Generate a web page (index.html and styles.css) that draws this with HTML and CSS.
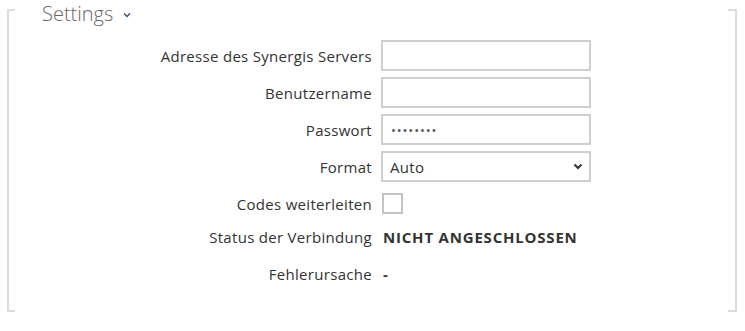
FILE: index.html
```html
<!DOCTYPE html>
<html lang="de">
<head>
<meta charset="utf-8">
<title>Settings</title>
<link rel="stylesheet" href="styles.css">
</head>
<body>
<section class="panel">
  <h2 class="panel-title">Settings
    <svg class="chev" width="8" height="6" viewBox="0 0 8 6"><polyline points="1,1.5 4,4.5 7,1.5" fill="none" stroke="#3a4a7a" stroke-width="1.4"/></svg>
  </h2>
  <div class="form">
    <label class="lbl" for="addr">Adresse des Synergis Servers</label>
    <div class="val"><input class="field" id="addr" type="text"></div>

    <label class="lbl" for="user">Benutzername</label>
    <div class="val"><input class="field" id="user" type="text"></div>

    <label class="lbl" for="pass">Passwort</label>
    <div class="val"><input class="field pw" id="pass" type="password" value="12345678"></div>

    <label class="lbl" for="fmt">Format</label>
    <div class="val">
      <div class="select-wrap">
        <select class="field select" id="fmt"><option>Auto</option></select>
        <svg class="sel-arrow" width="10" height="7" viewBox="0 0 10 7"><polyline points="1.5,1.5 5,5 8.5,1.5" fill="none" stroke="#333" stroke-width="2"/></svg>
      </div>
    </div>

    <label class="lbl" for="fwd">Codes weiterleiten</label>
    <div class="val"><span class="check" id="fwd"></span></div>

    <div class="lbl text">Status der Verbindung</div>
    <div class="val text strong">NICHT ANGESCHLOSSEN</div>

    <div class="lbl text">Fehlerursache</div>
    <div class="val text strong">-</div>
  </div>
</section>
</body>
</html>
```
FILE: styles.css
```css
html, body {
  margin: 0;
  padding: 0;
  background: #fff;
}
body {
  font-family: "Open Sans", "Noto Sans", sans-serif;
  color: #333;
  font-size: 15px;
  letter-spacing: 0.3px;
}
.panel {
  position: relative;
  display: flow-root;
  margin: 9px 0 0 7px;
  width: 730px;
  height: 303px;
  box-sizing: border-box;
  border-left: 2px solid #dcdcdc;
  border-right: 2px solid #dcdcdc;
}
.panel::before,
.panel::after {
  content: "";
  position: absolute;
  left: -2px;
  right: -2px;
  height: 2px;
  background:
    linear-gradient(#dcdcdc, #dcdcdc) left top / 8px 2px no-repeat,
    linear-gradient(#dcdcdc, #dcdcdc) right top / 9px 2px no-repeat;
}
.panel::before { top: 0; }
.panel::after { bottom: 0; }
.panel-title {
  margin: -9px 0 0 31px;
  padding: 0 4px 0 2px;
  display: flex;
  width: fit-content;
  align-items: center;
  gap: 10px;
  font-weight: 300;
  font-size: 20px;
  letter-spacing: 0;
  line-height: normal;
  color: #666;
  background: #fff;
  position: relative;
  z-index: 1;
}
.chev { margin-top: 3px; }
.form {
  display: grid;
  grid-template-columns: 363px 210px;
  column-gap: 9px;
  row-gap: 6px;
  margin-top: 13px;
  grid-auto-rows: 31px;
}
.lbl {
  display: flex;
  align-items: center;
  justify-content: flex-end;
  white-space: nowrap;
  color: #333;
}
.val {
  display: flex;
  align-items: center;
}
.text {
  align-items: flex-start;
  padding-top: 2px;
  line-height: 20px;
}
.strong {
  font-weight: 700;
  padding-left: 2px;
  letter-spacing: 0.8px;
}
.field {
  box-sizing: border-box;
  width: 210px;
  height: 31px;
  margin: 0;
  border: 2px solid #cfcfcf;
  border-radius: 0;
  background: #fff;
  font: inherit;
  letter-spacing: 0.3px;
  color: #333;
  padding: 0 8px;
  outline: none;
}
.pw {
  font-size: 13px;
  letter-spacing: 0.9px;
  color: #555;
}
.select-wrap {
  position: relative;
  width: 210px;
  height: 31px;
}
.select {
  appearance: none;
  -webkit-appearance: none;
  padding-left: 7px;
}
.sel-arrow {
  position: absolute;
  right: 8px;
  top: 12px;
  pointer-events: none;
}
.check {
  display: block;
  box-sizing: border-box;
  width: 21px;
  height: 21px;
  margin-left: 1px;
  border: 2px solid #c4c4c4;
  background: #fff;
}
```
